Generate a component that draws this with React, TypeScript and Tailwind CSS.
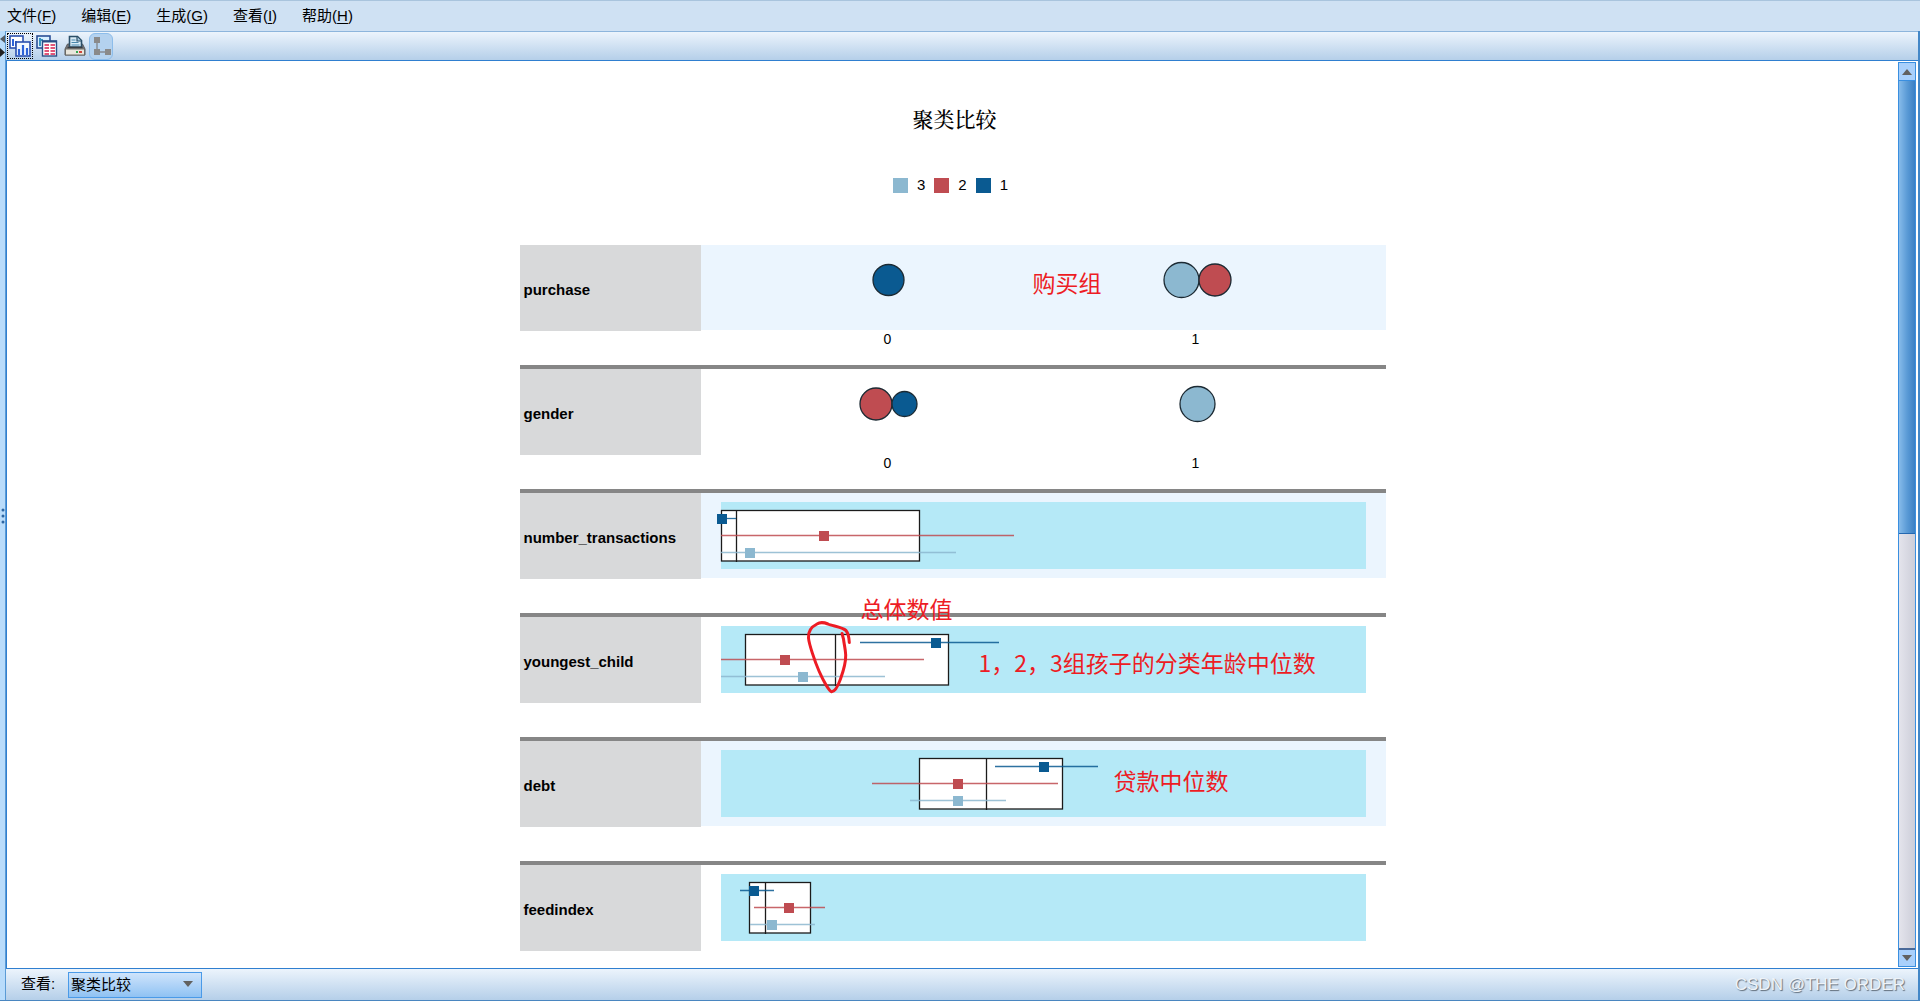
import React from "react";

const LIGHT = "#8cb8d0";
const RED = "#bf4c51";
const BLUE = "#0a5a91";

type Circle = { x: number; r: number; fill: string };
type Series = { y: number; from: number; to: number; at: number; fill: string };
type Box = { x1: number; x2: number; median: number };
type Row = {
  name: string;
  shaded?: boolean;
  circles?: Circle[];
  box?: Box;
  series?: Series[];
};

const rows: Row[] = [
  {
    name: "purchase",
    shaded: true,
    circles: [
      { x: 187.5, r: 15.5, fill: BLUE },
      { x: 480.5, r: 17.5, fill: LIGHT },
      { x: 514, r: 16, fill: RED },
    ],
  },
  {
    name: "gender",
    circles: [
      { x: 175, r: 16, fill: RED },
      { x: 203.5, r: 12.5, fill: BLUE },
      { x: 496.5, r: 17.5, fill: LIGHT },
    ],
  },
  {
    name: "number_transactions",
    shaded: true,
    box: { x1: 20.5, x2: 218.5, median: 35.5 },
    series: [
      { y: 26, from: 21, to: 35, at: 21, fill: BLUE },
      { y: 43, from: 20, to: 313, at: 123, fill: RED },
      { y: 60, from: 20, to: 255, at: 49, fill: LIGHT },
    ],
  },
  {
    name: "youngest_child",
    box: { x1: 44.5, x2: 247.5, median: 134.5 },
    series: [
      { y: 26, from: 159, to: 298, at: 235, fill: BLUE },
      { y: 43, from: 20, to: 223, at: 84, fill: RED },
      { y: 60, from: 20, to: 184, at: 102, fill: LIGHT },
    ],
  },
  {
    name: "debt",
    shaded: true,
    box: { x1: 218.5, x2: 361.5, median: 285.5 },
    series: [
      { y: 26, from: 294, to: 397, at: 343, fill: BLUE },
      { y: 43, from: 171, to: 357, at: 257, fill: RED },
      { y: 60, from: 209, to: 305, at: 257, fill: LIGHT },
    ],
  },
  {
    name: "feedindex",
    box: { x1: 48.5, x2: 109.5, median: 64.5 },
    series: [
      { y: 26, from: 39, to: 73, at: 53, fill: BLUE },
      { y: 43, from: 53, to: 124, at: 88, fill: RED },
      { y: 60, from: 49, to: 114, at: 71, fill: LIGHT },
    ],
  },
];

function CirclePlot({ circles }: { circles: Circle[] }) {
  return (
    <svg className="block h-[86px] w-[685px]" viewBox="0 0 685 86">
      {circles.map((c) => (
        <circle key={c.x} cx={c.x} cy={35} r={c.r} fill={c.fill} stroke="#1c2a33" strokeWidth="1.3" />
      ))}
    </svg>
  );
}

function BoxPlot({ box, series }: { box: Box; series: Series[] }) {
  return (
    <svg className="block h-[86px] w-[685px]" viewBox="0 0 685 86">
      <rect x="20" y="9" width="645" height="67" fill="#b5e9f7" />
      <rect x={box.x1} y="17.5" width={box.x2 - box.x1} height="50.5" fill="#fff" stroke="#1b1b1b" strokeWidth="1.3" />
      <path d={`M${box.median} 17V69`} stroke="#1b1b1b" strokeWidth="1.3" />
      {series.map((s) => (
        <g key={s.fill}>
          <path d={`M${s.from} ${s.y - 0.5}H${s.to}`} stroke={s.fill} strokeWidth="1.3" opacity="0.85" />
          <rect x={s.at - 5} y={s.y - 5} width="10" height="10" fill={s.fill} />
        </g>
      ))}
    </svg>
  );
}

function Note({ className, children }: { className: string; children: React.ReactNode }) {
  return (
    <span
      className={`absolute z-10 whitespace-nowrap text-[23px] leading-8 font-normal text-[#ed1c24] font-["Noto_Sans_CJK_SC",sans-serif] ${className}`}
    >
      {children}
    </span>
  );
}

const notes: Record<string, React.ReactNode> = {
  purchase: <Note className="left-[332px] top-[21px]">购买组</Note>,
  youngest_child: (
    <>
      <Note className="left-[160px] -top-[25px]">总体数值</Note>
      <Note className="left-[278px] top-[29px]">1，2，3组孩子的分类年龄中位数</Note>
      <svg className="absolute left-0 top-0 h-[86px] w-[200px]" viewBox="0 0 200 86" fill="none">
        <path
          d="M148.300 25.500C148 20 147 16 145 13.500C141 10 131 9 127 7C122 5 119 5 116 7C110 10 107 15 107.500 21C108 27 114 45 118 54C122 63 128 74 130.500 74.700C134 75 137 69 139.500 62C142 55 145 46 144.700 38C144.500 32 143 27 142.500 22L141 16.500"
          stroke="#ed1c24"
          strokeWidth="3"
          strokeLinecap="round"
        />
      </svg>
    </>
  ),
  debt: <Note className="left-[413px] top-[23px]">贷款中位数</Note>,
};

const menus = [
  ["文件", "F"],
  ["编辑", "E"],
  ["生成", "G"],
  ["查看", "I"],
  ["帮助", "H"],
];

const legend = [
  { label: "3", swatch: "bg-[#8cb8d0]" },
  { label: "2", swatch: "bg-[#bf4c51]" },
  { label: "1", swatch: "bg-[#0a5a91]" },
];

function ChartsIcon() {
  return (
    <svg className="h-[22px] w-[22px]" viewBox="0 0 22 22">
      <rect x="1" y="1" width="13" height="12" fill="#fff" stroke="#2b50ae" strokeWidth="1.6" />
      <path d="M4 4v7M7 6v5" stroke="#2d63d8" strokeWidth="2" />
      <rect x="7" y="7" width="14" height="14" fill="#f4f9ff" stroke="#2b50ae" strokeWidth="1.6" />
      <path d="M10 14v6M14 10v10M18 13v7" stroke="#2d63d8" strokeWidth="2.200" />
    </svg>
  );
}

function TableIcon() {
  return (
    <svg className="h-[22px] w-[22px]" viewBox="0 0 22 22">
      <rect x="1" y="1" width="13" height="12" fill="#d8efff" stroke="#2b4f96" strokeWidth="1.6" />
      <path d="M4 3v8M4 5h3" stroke="#3a94bf" strokeWidth="2" />
      <rect x="6.500" y="6" width="14" height="15" fill="#fff" stroke="#2b4f86" strokeWidth="1.4" />
      <path d="M6 6.500h15" stroke="#2b4f86" strokeWidth="2" />
      <path d="M8.500 10h4.500M14.500 10h4.500M8.500 13h4.500M14.500 13h4.500M8.500 16h4.500M14.500 16h4.500M8.500 19h4.500M14.500 19h4.500" stroke="#d81e4c" strokeWidth="1.600" />
    </svg>
  );
}

function PrinterIcon() {
  return (
    <svg className="h-[22px] w-[22px]" viewBox="0 0 22 22">
      <path d="M3.500 9h15l2.500 5v6H1v-6z" fill="#77777a" stroke="#5a5a5c" strokeWidth="1" />
      <path d="M5.500 12V1.500h8l4 4V12z" fill="#d9ebf6" stroke="#2b4f68" strokeWidth="1.6" />
      <path d="M13 2v4h4" fill="#a9cde4" stroke="#2b4f68" strokeWidth="1.2" />
      <path d="M7.500 5h4M7.500 7.500h7M7.500 10h8" stroke="#4a87ab" strokeWidth="1.2" />
      <path d="M3.500 12.500h15" stroke="#3a3d40" strokeWidth="1.4" />
      <rect x="1.500" y="14" width="19" height="6" fill="#e9e6dc" stroke="#6a6a64" />
      <path d="M12 17h2" stroke="#35a853" strokeWidth="2" />
      <path d="M15 17h3" stroke="#d0463b" strokeWidth="2" />
    </svg>
  );
}

function TreeIcon() {
  return (
    <svg className="h-[22px] w-[20px]" viewBox="0 0 20 22">
      <path d="M6 5v12h11" fill="none" stroke="#858b92" strokeWidth="1.4" />
      <rect x="3" y="2" width="6" height="6" fill="#8a8a8a" />
      <rect x="3" y="14" width="6" height="6" fill="#8a8a8a" />
      <rect x="14" y="14" width="6" height="6" fill="#8a8a8a" />
    </svg>
  );
}

function Arrow({ up = false }: { up?: boolean }) {
  return (
    <svg className="h-[6px] w-[12px]" viewBox="0 0 12 6">
      <path d={up ? "M6 0L11 6H1z" : "M6 6L11 0H1z"} fill="#62615f" />
    </svg>
  );
}

export default function App() {
  return (
    <div className='flex h-screen flex-col overflow-hidden bg-[#cfe1f3] text-black font-["Liberation_Sans","Noto_Sans_CJK_SC",sans-serif]'>
      <nav className="flex h-[31px] shrink-0 items-center gap-[25px] border-t border-[#a9c4dd] bg-[#cfe1f3] pl-[7px]">
        {menus.map(([label, key]) => (
          <button key={key} type="button" className="h-6 whitespace-nowrap text-[15px] leading-6">
            {label}(<span className="underline underline-offset-2">{key}</span>)
          </button>
        ))}
      </nav>

      <div className="flex min-h-0 flex-1 border-b border-[#4a86c0]">
        <div className="flex w-[6px] shrink-0 flex-col items-start border-r border-[#5b9bd5] bg-[#b9dcfb]">
          <svg className="mt-1 h-[24px] w-[5px]" viewBox="0 0 5 24">
            <path d="M5 0v8L0 4z" fill="#555b62" />
            <path d="M0 13v9l5-4.500z" fill="#222" />
          </svg>
          <div className="flex flex-1 items-center pb-7">
            <svg className="h-[18px] w-[5px]" viewBox="0 0 5 18">
              <circle cx="3" cy="3" r="1.500" fill="#2d66a3" />
              <circle cx="3" cy="9" r="1.500" fill="#2d66a3" />
              <circle cx="3" cy="15" r="1.500" fill="#2d66a3" />
            </svg>
          </div>
        </div>

        <div className="flex min-w-0 flex-1 flex-col border-r-2 border-[#4387c7]">
          <div
            role="toolbar"
            className="flex h-[29px] shrink-0 items-center border-t border-[#8db5dc] bg-linear-to-b from-[#ecf4fc] to-[#b5cfe9] pl-px"
          >
            <button type="button" aria-label="图表视图" className="flex h-[26px] w-[26px] items-center justify-center border border-dotted border-black">
              <ChartsIcon />
            </button>
            <button type="button" aria-label="表格视图" className="flex h-[26px] w-[28px] items-center justify-center">
              <TableIcon />
            </button>
            <button type="button" aria-label="打印" className="flex h-[26px] w-[28px] items-center justify-center">
              <PrinterIcon />
            </button>
            <button type="button" aria-label="树视图" className="flex h-[27px] w-[24px] items-center justify-center rounded-md border border-[#8dbdea] bg-[#b4d2ef]">
              <TreeIcon />
            </button>
          </div>

          <div className="flex min-h-0 flex-1 border-y border-l border-[#2f7fd0] bg-white">
            <main className="min-w-0 flex-1 overflow-hidden">
              <div className="mx-auto flex w-[866px] flex-col pt-10">
                <h1 className='h-[34px] pl-1 text-center text-[21px] leading-[34px] font-medium font-["Noto_Serif_CJK_SC","Noto_Sans_CJK_SC",serif]'>
                  聚类比较
                </h1>
                <ul className="mt-10 mb-[50px] flex h-5 items-center justify-center gap-[9px] pr-1">
                  {legend.map((l) => (
                    <li key={l.label} className="flex items-center gap-[9px] text-[15px] leading-5">
                      <span className={`h-[15px] w-[15px] ${l.swatch}`} />
                      {l.label}
                    </li>
                  ))}
                </ul>
                {rows.map((row, i) => (
                  <section key={row.name} className={i < rows.length - 1 ? "h-[124px] shrink-0 border-b-4 border-[#868686]" : "h-[86px] shrink-0"}>
                    <div className="flex">
                      <h2 className="flex h-[86px] w-[181px] shrink-0 items-center bg-[#d8d9da] pt-1 pl-1 text-[15px] font-bold">
                        {row.name}
                      </h2>
                      <div className={`relative h-[85px] w-[685px] ${row.shaded ? "bg-[#ebf5fe]" : ""}`}>
                        {row.circles && <CirclePlot circles={row.circles} />}
                        {row.box && row.series && <BoxPlot box={row.box} series={row.series} />}
                        {notes[row.name]}
                      </div>
                    </div>
                    {row.circles && (
                      <div className="flex pl-[214px] text-center text-[14px] leading-4">
                        <span className="w-[308px]">0</span>
                        <span className="w-[308px]">1</span>
                      </div>
                    )}
                  </section>
                ))}
              </div>
            </main>

            <div className="mr-[2px] my-px flex w-[18px] shrink-0 flex-col border border-[#3a8fe0] bg-[#d6d7e3]">
              <button type="button" aria-label="向上滚动" className="flex h-[18px] items-center justify-center border-b border-[#3a8fe0] bg-[#a9d0fb]">
                <Arrow up />
              </button>
              <div className="flex-[453] border-b border-[#2468b0] bg-linear-to-r from-[#86bbea] via-[#5b9bd6] to-[#3a7fc4]" />
              <div className="flex-[414] bg-linear-to-r from-[#e4e4ec] to-[#cdced9]" />
              <button type="button" aria-label="向下滚动" className="flex h-[18px] items-center justify-center border-t-2 border-[#4a6a9a] bg-[#a9d0fb]">
                <Arrow />
              </button>
            </div>
          </div>

          <footer className="flex h-[31px] shrink-0 items-center bg-linear-to-b from-[#ecf4fc] to-[#b5cfe9] pl-[15px]">
            <label htmlFor="view" className="w-[47px] text-[15px]">
              查看:
            </label>
            <div className="relative">
              <select
                id="view"
                className="block h-[26px] w-[134px] appearance-none border border-[#4a9ae8] bg-linear-to-b from-[#cfe4fb] to-[#8fc2f3] pl-[2px] text-[15px] leading-6 outline-none"
              >
                <option>聚类比较</option>
              </select>
              <span className="pointer-events-none absolute right-2 top-[9px] flex">
                <Arrow />
              </span>
            </div>
            <span className='ml-auto pr-[13px] text-[17px] text-[#eef3f8] font-["Liberation_Sans",sans-serif] [text-shadow:1px_1px_1px_#5f6b78]'>
              CSDN @THE ORDER
            </span>
          </footer>
        </div>
      </div>
    </div>
  );
}
